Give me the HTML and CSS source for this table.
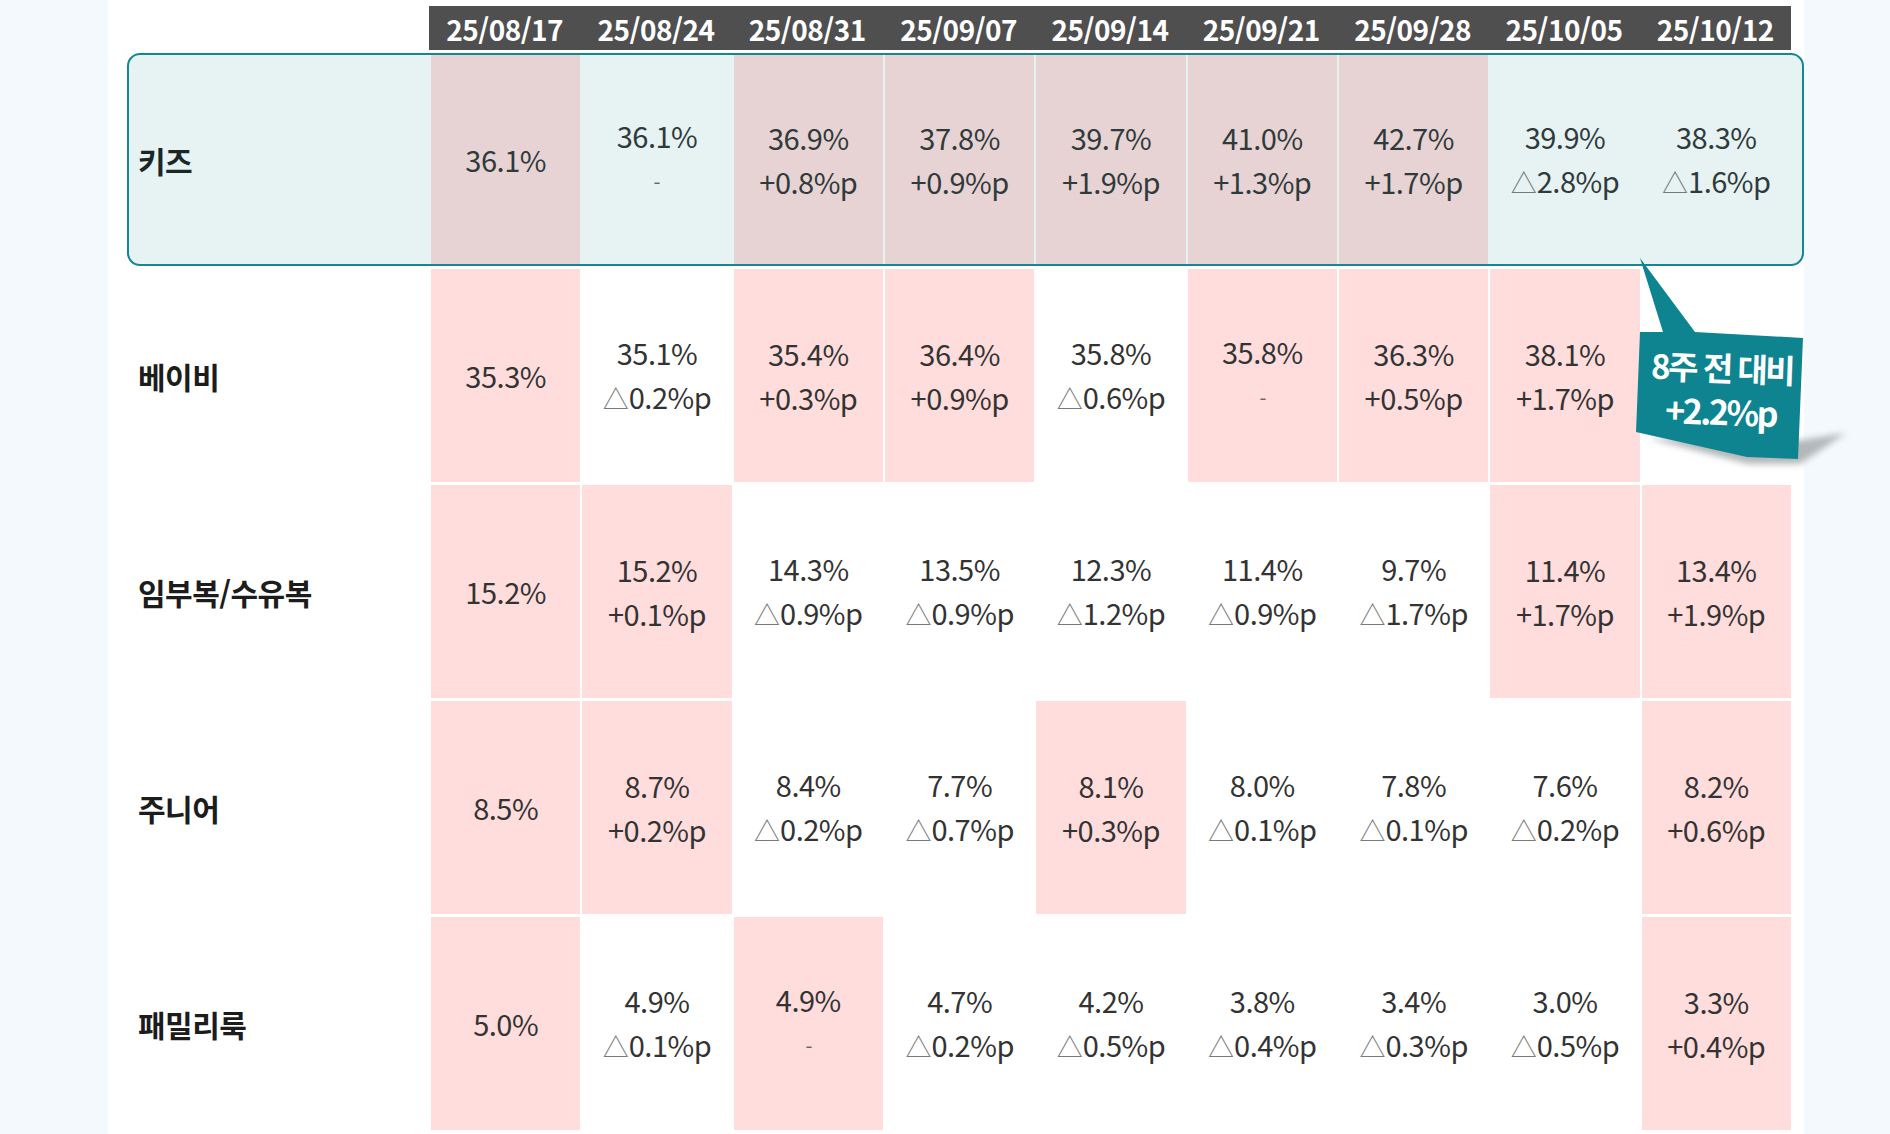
FILE: index.html
```html
<!DOCTYPE html>
<html lang="ko">
<head>
<meta charset="utf-8">
<title>카테고리 비중</title>
<link rel="stylesheet" href="styles.css">
</head>
<body>
<div class="panel">
  <div class="grid">
    <div class="corner"></div>
    <div class="hd">25/08/17</div>
    <div class="hd">25/08/24</div>
    <div class="hd">25/08/31</div>
    <div class="hd">25/09/07</div>
    <div class="hd">25/09/14</div>
    <div class="hd">25/09/21</div>
    <div class="hd">25/09/28</div>
    <div class="hd">25/10/05</div>
    <div class="hd">25/10/12</div>

    <div class="label">키즈</div>
    <div class="cell pink"><span class="v">36.1%</span></div>
    <div class="cell"><span class="v">36.1%</span><span class="d dash">-</span></div>
    <div class="cell pink"><span class="v">36.9%</span><span class="d">+0.8%p</span></div>
    <div class="cell pink"><span class="v">37.8%</span><span class="d">+0.9%p</span></div>
    <div class="cell pink"><span class="v">39.7%</span><span class="d">+1.9%p</span></div>
    <div class="cell pink"><span class="v">41.0%</span><span class="d">+1.3%p</span></div>
    <div class="cell pink"><span class="v">42.7%</span><span class="d">+1.7%p</span></div>
    <div class="cell"><span class="v">39.9%</span><span class="d"><i class="tri">△</i>2.8%p</span></div>
    <div class="cell"><span class="v">38.3%</span><span class="d"><i class="tri">△</i>1.6%p</span></div>

    <div class="label">베이비</div>
    <div class="cell pink"><span class="v">35.3%</span></div>
    <div class="cell"><span class="v">35.1%</span><span class="d"><i class="tri">△</i>0.2%p</span></div>
    <div class="cell pink"><span class="v">35.4%</span><span class="d">+0.3%p</span></div>
    <div class="cell pink"><span class="v">36.4%</span><span class="d">+0.9%p</span></div>
    <div class="cell"><span class="v">35.8%</span><span class="d"><i class="tri">△</i>0.6%p</span></div>
    <div class="cell pink"><span class="v">35.8%</span><span class="d dash">-</span></div>
    <div class="cell pink"><span class="v">36.3%</span><span class="d">+0.5%p</span></div>
    <div class="cell pink"><span class="v">38.1%</span><span class="d">+1.7%p</span></div>
    <div class="cell"></div>

    <div class="label">임부복/수유복</div>
    <div class="cell pink"><span class="v">15.2%</span></div>
    <div class="cell pink"><span class="v">15.2%</span><span class="d">+0.1%p</span></div>
    <div class="cell"><span class="v">14.3%</span><span class="d"><i class="tri">△</i>0.9%p</span></div>
    <div class="cell"><span class="v">13.5%</span><span class="d"><i class="tri">△</i>0.9%p</span></div>
    <div class="cell"><span class="v">12.3%</span><span class="d"><i class="tri">△</i>1.2%p</span></div>
    <div class="cell"><span class="v">11.4%</span><span class="d"><i class="tri">△</i>0.9%p</span></div>
    <div class="cell"><span class="v">9.7%</span><span class="d"><i class="tri">△</i>1.7%p</span></div>
    <div class="cell pink"><span class="v">11.4%</span><span class="d">+1.7%p</span></div>
    <div class="cell pink"><span class="v">13.4%</span><span class="d">+1.9%p</span></div>

    <div class="label">주니어</div>
    <div class="cell pink"><span class="v">8.5%</span></div>
    <div class="cell pink"><span class="v">8.7%</span><span class="d">+0.2%p</span></div>
    <div class="cell"><span class="v">8.4%</span><span class="d"><i class="tri">△</i>0.2%p</span></div>
    <div class="cell"><span class="v">7.7%</span><span class="d"><i class="tri">△</i>0.7%p</span></div>
    <div class="cell pink"><span class="v">8.1%</span><span class="d">+0.3%p</span></div>
    <div class="cell"><span class="v">8.0%</span><span class="d"><i class="tri">△</i>0.1%p</span></div>
    <div class="cell"><span class="v">7.8%</span><span class="d"><i class="tri">△</i>0.1%p</span></div>
    <div class="cell"><span class="v">7.6%</span><span class="d"><i class="tri">△</i>0.2%p</span></div>
    <div class="cell pink"><span class="v">8.2%</span><span class="d">+0.6%p</span></div>

    <div class="label">패밀리룩</div>
    <div class="cell pink"><span class="v">5.0%</span></div>
    <div class="cell"><span class="v">4.9%</span><span class="d"><i class="tri">△</i>0.1%p</span></div>
    <div class="cell pink"><span class="v">4.9%</span><span class="d dash">-</span></div>
    <div class="cell"><span class="v">4.7%</span><span class="d"><i class="tri">△</i>0.2%p</span></div>
    <div class="cell"><span class="v">4.2%</span><span class="d"><i class="tri">△</i>0.5%p</span></div>
    <div class="cell"><span class="v">3.8%</span><span class="d"><i class="tri">△</i>0.4%p</span></div>
    <div class="cell"><span class="v">3.4%</span><span class="d"><i class="tri">△</i>0.3%p</span></div>
    <div class="cell"><span class="v">3.0%</span><span class="d"><i class="tri">△</i>0.5%p</span></div>
    <div class="cell pink"><span class="v">3.3%</span><span class="d">+0.4%p</span></div>
  </div>

  <div class="highlight"></div>

  <div class="callout">
    <svg class="callout-shape" width="260" height="230" viewBox="0 0 260 230">
      <defs>
        <filter id="blur" x="-20%" y="-20%" width="140%" height="140%">
          <feGaussianBlur stdDeviation="3"/>
        </filter>
      </defs>
      <polygon points="28,188 128,214 180,214 226,183 182,190" fill="#b4b8ba" filter="url(#blur)"/>
      <polygon points="20,8 75,82 183,88 178,209 127,207 16,182 20,82 43,82" fill="#0e8491"/>
    </svg>
    <div class="callout-text">
      <div class="ct1">8주 전 대비</div>
      <div class="ct2">+2.2%p</div>
    </div>
  </div>
</div>
</body>
</html>
```

FILE: styles.css
```css
html, body {
  margin: 0;
  padding: 0;
}

body {
  background: #f3f9fd;
  font-family: "Noto Sans CJK KR", "Noto Sans", sans-serif;
  color: #333;
}

.panel {
  position: relative;
  margin-left: 108px;
  width: 1696px;
  height: 1134px;
  background: #ffffff;
  padding-top: 6px;
  box-sizing: border-box;
  overflow: visible;
}

.grid {
  display: grid;
  grid-template-columns: 321px repeat(9, 151.33px);
  grid-template-rows: 44px repeat(5, 213px);
  row-gap: 3px;
  width: 1683px;
}

.corner {
  background: transparent;
}

.hd {
  background: #4f4f4f;
  color: #ffffff;
  font-weight: 700;
  font-size: 28px;
  display: flex;
  align-items: center;
  justify-content: center;
  letter-spacing: -0.5px;
  padding-top: 2px;
}

.label {
  display: flex;
  align-items: center;
  padding-left: 30px;
  padding-top: 1px;
  font-size: 30px;
  font-weight: 700;
  color: #1c1c1c;
  letter-spacing: -0.5px;
}

.cell {
  margin-left: 2px;
  display: flex;
  flex-direction: column;
  align-items: center;
  justify-content: center;
  padding-bottom: 2px;
}

.cell.pink {
  background: #ffdddc;
}

.v, .d {
  font-size: 29px;
  line-height: 44px;
  color: #333333;
  letter-spacing: -0.5px;
}

.d.dash {
  color: #666;
  padding-top: 3px;
  transform: scale(0.7);
}

.tri {
  font-style: normal;
  color: #7a7a7a;
  font-size: 26px;
  letter-spacing: 0;
}

.highlight {
  position: absolute;
  left: 19px;
  top: 53px;
  width: 1677px;
  height: 213px;
  box-sizing: border-box;
  border: 2px solid #138893;
  border-radius: 13px;
  background: rgba(15, 128, 142, 0.1);
}

.callout {
  position: absolute;
  left: 1512px;
  top: 250px;
  width: 260px;
  height: 230px;
}

.callout-shape {
  position: absolute;
  left: 0;
  top: 0;
  display: block;
}

.callout-text {
  position: absolute;
  left: 18px;
  top: 96px;
  width: 167px;
  text-align: center;
  color: #ffffff;
  font-weight: 700;
  transform: rotate(2deg);
}

.ct1 {
  font-size: 33px;
  line-height: 43px;
  letter-spacing: -2.5px;
  white-space: nowrap;
}

.ct2 {
  font-size: 34px;
  line-height: 43px;
  letter-spacing: -2.5px;
  white-space: nowrap;
}
```
